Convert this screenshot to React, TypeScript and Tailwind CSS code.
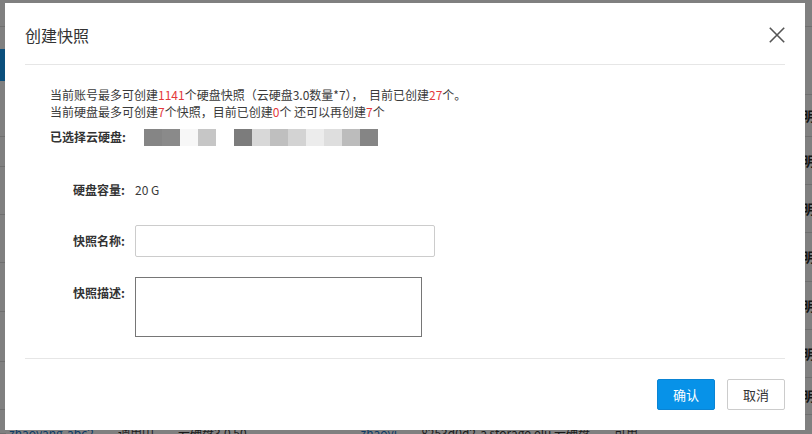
import React from 'react';

const font = { fontFamily: '"Noto Sans CJK SC", "Liberation Sans", sans-serif' };

const leftRows = [27, 110, 30, 48, 48, 49, 50, 48, 24];
const rightRows = [27, 68, 42, 48, 48, 49, 48, 48, 37];

const mosaic = [
    '#858585', '#8a8a8a', '#f7f7f7', '#c6c6c6', '#ffffff',
    '#7c7c7c', '#d8d8d8', '#bfbfbf', '#d3d3d3', '#ececec', '#dedede', '#bcbcbc', '#858585',
];

function Red({ children }: { children: React.ReactNode }) {
    return <span className="text-[#e4393c]">{children}</span>;
}

export default function App() {
    return (
        <div className="relative w-[812px] h-[434px] overflow-hidden bg-[#808080]" style={font}>
            {/* dimmed page behind the dialog */}
            <div className="flex h-full">
                <div className="w-[6px] flex flex-col">
                    {leftRows.map((h, i) => (
                        <div key={i} style={{ height: h }} className="border-b border-[#6f6f6f] shrink-0 relative">
                            {i === 1 && <div className="mt-[22px] h-[32px] bg-[#0b4f7c]" />}
                        </div>
                    ))}
                </div>
                <div className="flex-1 flex flex-col justify-end">
                    <div className="flex items-start h-[8px] text-[12px] leading-[14px] gap-6 pl-[3px] whitespace-nowrap">
                        <span className="text-[#0d3a66]">zhaoyang-abc2</span>
                        <span className="text-[#1a1a1a]">调用中</span>
                        <span className="text-[#1a1a1a]">云硬盘3.0 50</span>
                        <span className="ml-[90px] text-[#0d3a66]">zhaoyi</span>
                        <span className="text-[#1a1a1a]">8253d0d2-a storage.elu 云硬盘</span>
                        <span className="text-[#1a1a1a]">可用</span>
                    </div>
                </div>
                <div className="w-[12px] flex flex-col">
                    {rightRows.map((h, i) => (
                        <div key={i} style={{ height: h }} className="border-b border-[#6f6f6f] shrink-0 flex items-center overflow-hidden">
                            {i > 1 && <span className="text-[13px] text-[#151515] ml-[2px] font-bold whitespace-nowrap">明细</span>}
                        </div>
                    ))}
                </div>
            </div>

            {/* dialog */}
            <div className="absolute left-[5px] top-[3px] w-[800px] h-[427px] bg-white px-5 flex flex-col">
                <div className="h-[61px] pt-[20px] flex items-start justify-between">
                    <h2 className="text-[16px] leading-[24px] text-[#333]">创建快照</h2>
                    <button className="mt-[4px] w-[16px] h-[16px] text-[#555]">
                        <svg width="16" height="16" viewBox="0 0 16 16" fill="none" stroke="currentColor" strokeWidth="1.6">
                            <path d="M0.8 0.8 L15.2 15.2 M15.2 0.8 L0.8 15.2" />
                        </svg>
                    </button>
                </div>
                <div className="h-px bg-[#e6e6e6]" />

                <div className="pl-[25px] pt-[21px] pb-[21px] text-[12px] text-[#3a3a3a]">
                    <p className="leading-[17px]">
                        当前账号最多可创建<Red>1141</Red>个硬盘快照（云硬盘3.0数量*7）， &nbsp;目前已创建<Red>27</Red>个。
                    </p>
                    <p className="leading-[17px]">
                        当前硬盘最多可创建<Red>7</Red>个快照，目前已创建<Red>0</Red>个 还可以再创建<Red>7</Red>个
                    </p>

                    <div className="mt-[8px] h-[18px] flex items-center">
                        <span className="w-[76px] font-bold text-[#333] whitespace-nowrap">已选择云硬盘:</span>
                        <div className="ml-[18px] flex h-[17px]">
                            {mosaic.map((c, i) => (
                                <div key={i} className="w-[18px] h-full" style={{ backgroundColor: c }} />
                            ))}
                        </div>
                    </div>

                    <div className="mt-[35px] h-[18px] flex items-center">
                        <span className="w-[76px] text-right pr-px font-bold text-[#333]">硬盘容量:</span>
                        <span className="ml-[9px]">20 G</span>
                    </div>

                    <div className="mt-[26px] h-[32px] flex items-center">
                        <span className="w-[76px] text-right pr-px font-bold text-[#333]">快照名称:</span>
                        <input className="ml-[9px] w-[300px] h-[32px] border border-[#cccccc] rounded-[2px] outline-none px-2" />
                    </div>

                    <div className="mt-[20px] flex items-start">
                        <span className="w-[76px] h-[32px] leading-[32px] text-right pr-px font-bold text-[#333]">快照描述:</span>
                        <textarea className="ml-[9px] w-[287px] h-[60px] border border-[#767676] outline-none resize-none p-1" />
                    </div>
                </div>

                <div className="h-px bg-[#e6e6e6]" />
                <div className="pt-[20px] flex justify-end gap-3 text-[13px]">
                    <button className="w-[58px] h-[31px] rounded-[2px] bg-[#0792e8] border border-[#0a84d4] text-white">确认</button>
                    <button className="w-[58px] h-[31px] rounded-[2px] bg-white border border-[#cccccc] text-[#333]">取消</button>
                </div>
            </div>
        </div>
    );
}
